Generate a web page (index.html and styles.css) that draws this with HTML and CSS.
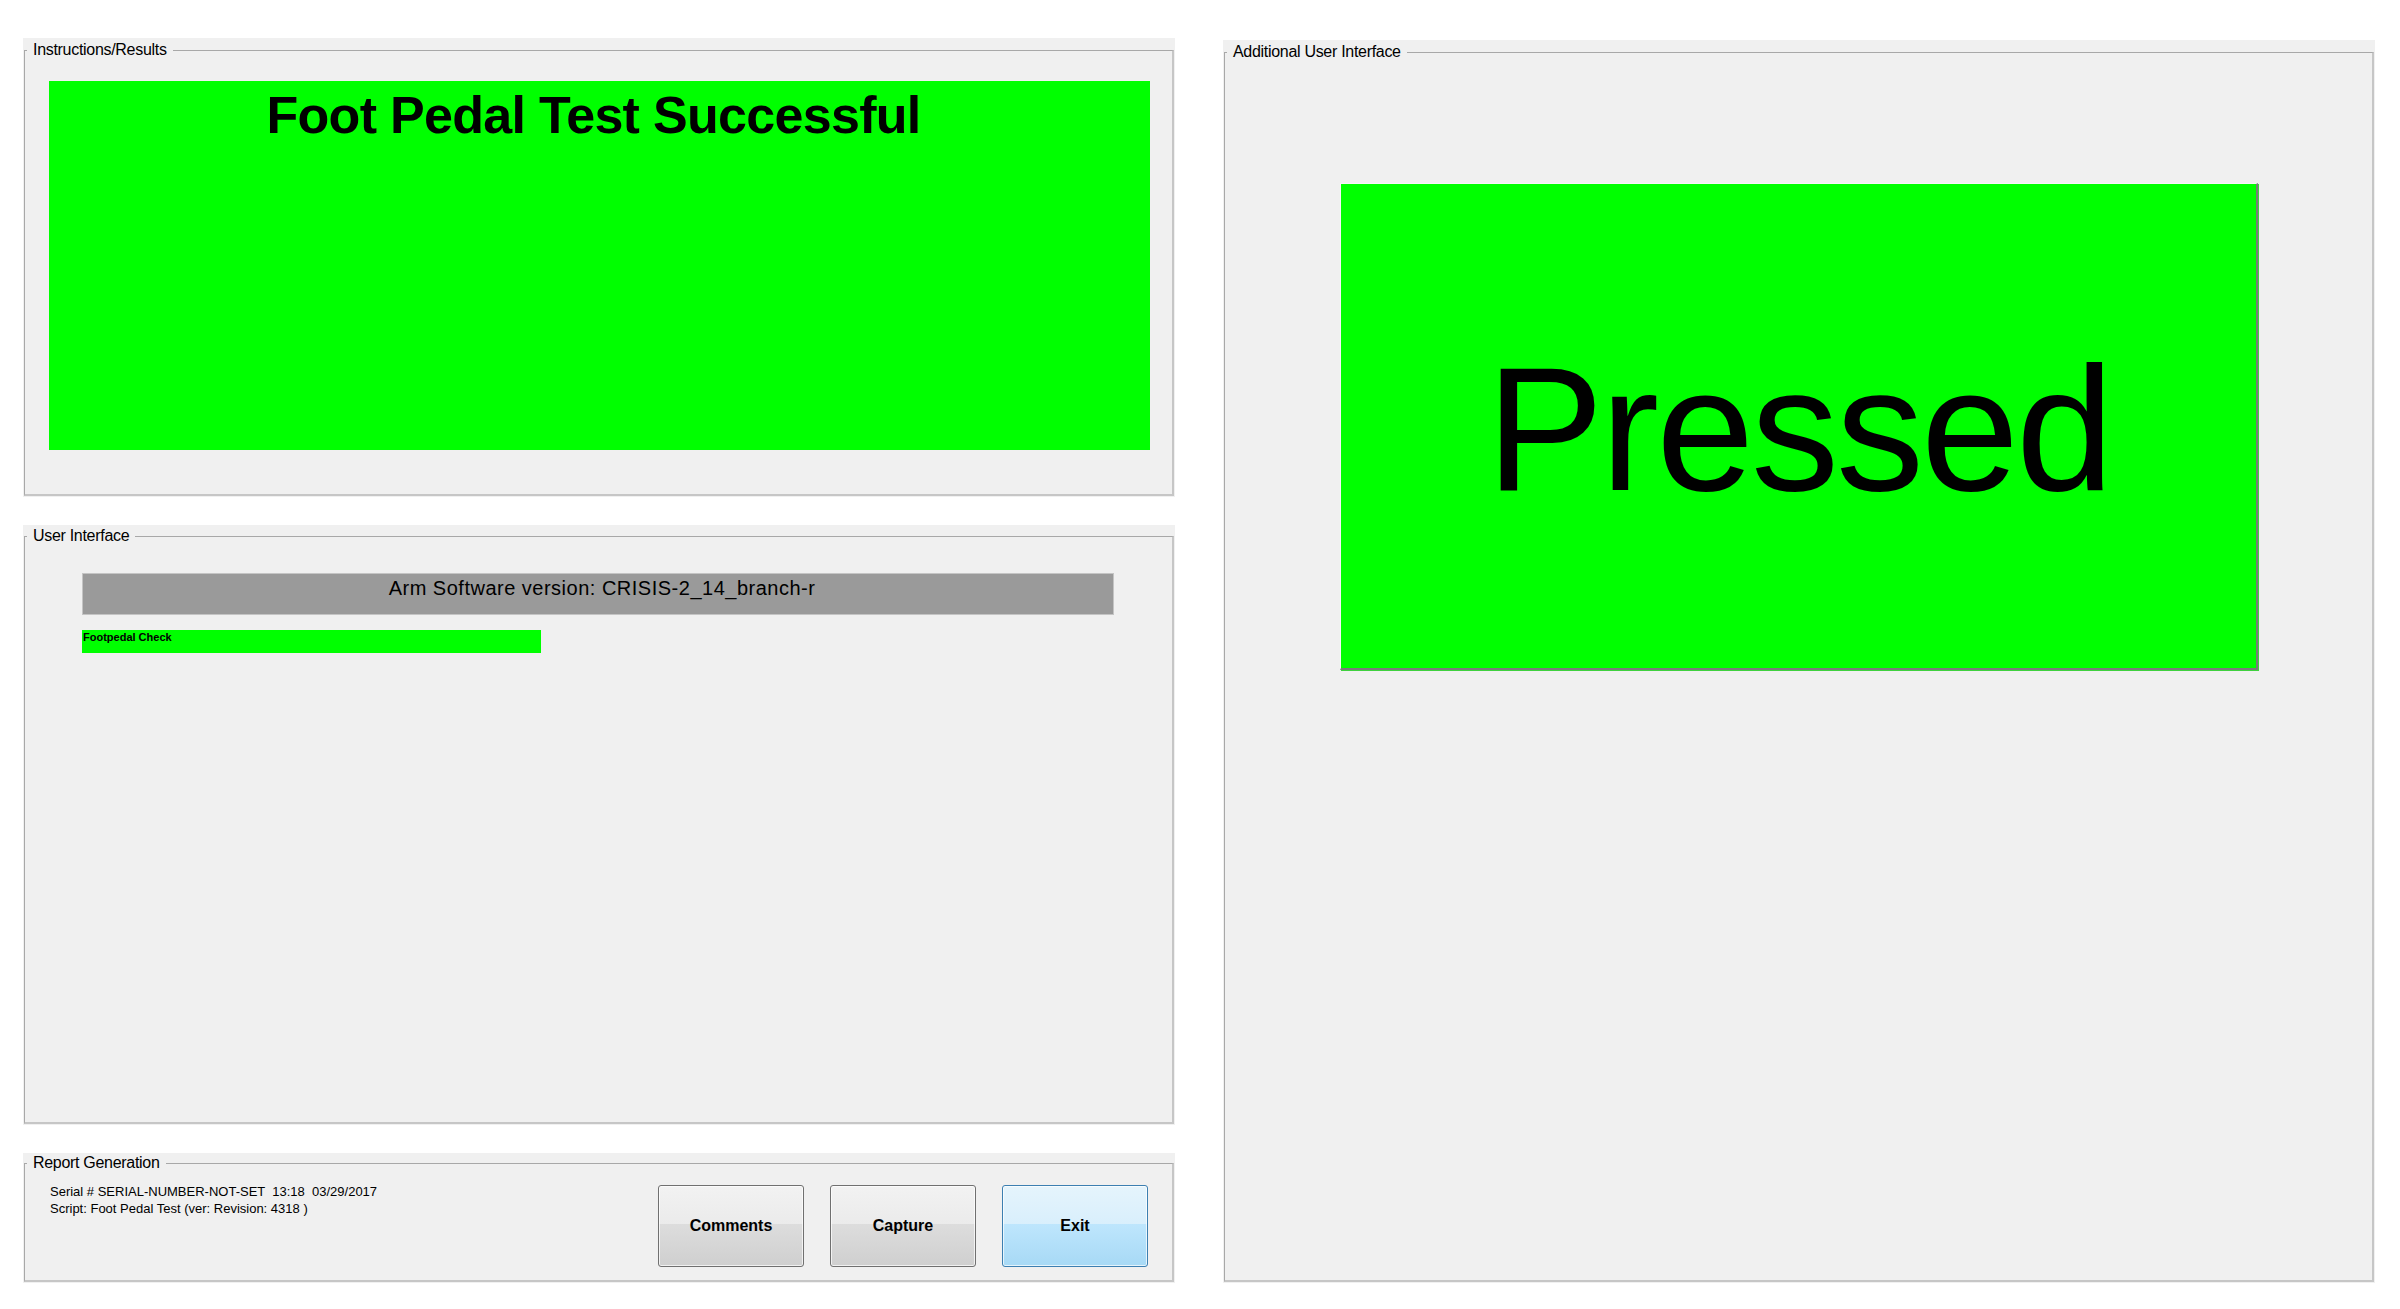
FILE: index.html
```html
<!DOCTYPE html>
<html>
<head>
<meta charset="utf-8">
<title>Foot Pedal Test</title>
<link rel="stylesheet" href="styles.css">
</head>
<body>
<div class="app">
  <div class="left-col">
    <div class="panel panel-instr">
      <fieldset class="group">
        <legend class="group-title">Instructions/Results</legend>
        <div class="result-box">Foot Pedal Test Successful</div>
      </fieldset>
    </div>
    <div class="panel panel-ui">
      <fieldset class="group">
        <legend class="group-title">User Interface</legend>
        <div class="version-bar">Arm Software version: CRISIS-2_14_branch-r</div>
        <div class="check-bar">Footpedal Check</div>
      </fieldset>
    </div>
    <div class="panel panel-report">
      <fieldset class="group report-group">
        <legend class="group-title">Report Generation</legend>
        <div class="report-row">
          <div class="report-info">
            <div class="info-line">Serial # SERIAL-NUMBER-NOT-SET  13:18  03/29/2017</div>
            <div class="info-line">Script: Foot Pedal Test (ver: Revision: 4318 )</div>
          </div>
          <div class="buttons">
            <button class="btn">Comments</button>
            <button class="btn">Capture</button>
            <button class="btn btn-default">Exit</button>
          </div>
        </div>
      </fieldset>
    </div>
  </div>
  <div class="panel panel-extra">
    <fieldset class="group">
      <legend class="group-title">Additional User Interface</legend>
      <div class="pressed-box"><span class="pressed-text">Pressed</span></div>
    </fieldset>
  </div>
</div>
</body>
</html>
```
FILE: styles.css
```css
html, body {
  margin: 0;
  padding: 0;
  background: #ffffff;
}

body {
  font-family: "Liberation Sans", Arial, sans-serif;
  color: #000;
}

.app {
  display: grid;
  grid-template-columns: 1152px 1152px;
  column-gap: 48px;
  padding: 38px 0 0 23px;
  align-items: start;
}

.left-col {
  display: flex;
  flex-direction: column;
  gap: 28px;
}

.panel {
  background: #f0f0f0;
  display: flex;
  flex-direction: column;
  padding: 2px 1px 1px 1px;
  box-sizing: border-box;
}

.panel-instr { height: 459px; padding-top: 3px; }
.panel-ui { height: 600px; }
.panel-report { height: 130px; padding-top: 1px; }
.panel-extra { height: 1243px; margin-top: 2px; padding-top: 3px; }

.group {
  flex: 1;
  min-height: 0;
  min-width: 0;
  margin: 0;
  padding: 0;
  border-style: solid;
  border-width: 1px 2px 2px 1px;
  border-color: #a8a8a8 #c6c6c6 #c6c6c6 #a8a8a8;
}

.group-title {
  margin-left: 2px;
  padding: 0 6px;
  font-size: 16px;
  line-height: 18px;
  letter-spacing: -0.3px;
  color: #000;
}

/* Instructions/Results */
.result-box {
  margin: 22px 22px 0 24px;
  height: 369px;
  background: #00ff00;
  box-sizing: border-box;
  padding: 5px 12px 0 0;
  text-align: center;
  font-weight: bold;
  font-size: 52px;
  line-height: 1.15;
  letter-spacing: -0.7px;
}

/* User Interface */
.version-bar {
  margin: 28px 58px 0 57px;
  height: 42px;
  box-sizing: border-box;
  background: #9a9a9a;
  border: 1px solid #c4c4c4;
  text-align: center;
  font-size: 20px;
  line-height: 22px;
  letter-spacing: 0.5px;
  padding: 3px 0 0 8px;
}

.check-bar {
  margin: 15px 0 0 57px;
  width: 459px;
  height: 23px;
  background: #00ff00;
  font-size: 11px;
  font-weight: bold;
  line-height: 12px;
  padding: 1px 0 0 1px;
  box-sizing: border-box;
}

/* Report Generation */
.report-row {
  display: flex;
  align-items: flex-start;
  padding: 11px 24px 0 25px;
}

.report-info {
  flex: 1;
}

.info-line {
  font-size: 13px;
  line-height: 17px;
  white-space: pre;
}

.buttons {
  display: flex;
  flex-shrink: 0;
  gap: 26px;
  margin-top: 2px;
}

.btn {
  flex-shrink: 0;
  width: 146px;
  height: 82px;
  box-sizing: border-box;
  border: 1px solid #707070;
  border-radius: 3px;
  box-shadow: inset 0 0 0 1px rgba(255, 255, 255, 0.7);
  background: linear-gradient(to bottom, #f2f2f2 0%, #ebebeb 47%, #dddddd 47%, #cfcfcf 100%);
  font-family: "Liberation Sans", Arial, sans-serif;
  font-weight: bold;
  font-size: 16px;
  color: #000;
  padding: 0;
}

.btn-default {
  border-color: #3c7fb1;
  background: linear-gradient(to bottom, #e5f4fc 0%, #d9effc 47%, #bee6fd 47%, #a7d9f5 100%);
}

/* Additional User Interface */
.pressed-box {
  margin: 122px 0 0 115px;
  width: 918px;
  height: 487px;
  box-sizing: border-box;
  background: #00ff00;
  border-style: solid;
  border-width: 1px 2px 2px 1px;
  border-color: #f6f6f6 #7a7a7a #7a7a7a #f6f6f6;
  box-shadow: 1px 1px 0 #3fd13f;
  display: flex;
  align-items: center;
  justify-content: center;
  padding-top: 6px;
}

.pressed-text {
  font-size: 176px;
  line-height: 1;
  letter-spacing: -3px;
}
```
